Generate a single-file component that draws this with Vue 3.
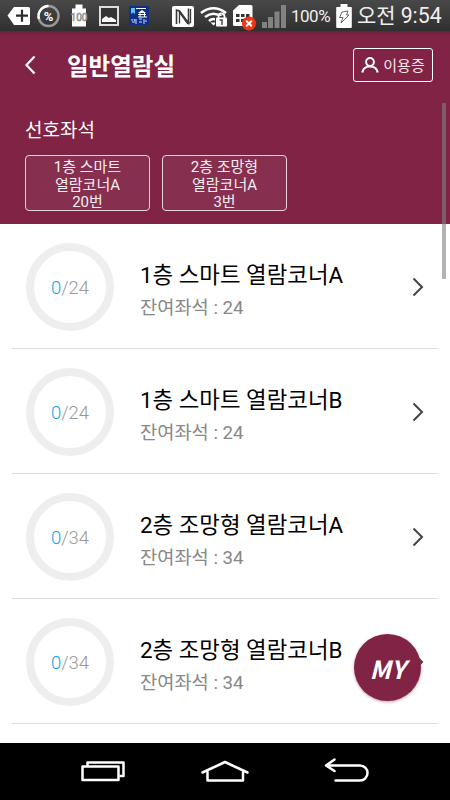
<template>
  <div class="phone">
    <div class="status-bar">
      <svg class="status-icons" width="288" height="32" viewBox="0 0 288 32">
        <path d="M7.5 15.5L14 7h14.5a1.5 1.5 0 0 1 1.5 1.500v15a1.500 1.500 0 0 1-1.500 1.500H14z" fill="#fff" />
        <path d="M16 15.700h12M22 9.700v12" stroke="#2c2c2c" stroke-width="2.200" />
        <circle cx="48.500" cy="16" r="10" fill="none" stroke="#999" stroke-width="2.400" />
        <path d="M48.500 6a10 10 0 0 0-9.500 13" fill="none" stroke="#fff" stroke-width="2.400" />
        <text x="48.500" y="20.500" text-anchor="middle" class="icon-text" font-size="13">%</text>
        <path d="M75.500 4.500h7v4H86v18H72v-18h3.500z" fill="#fff" />
        <text x="79" y="21" text-anchor="middle" class="hundred">100</text>
        <rect x="100" y="7" width="18" height="18" fill="#343434" stroke="#ddd" stroke-width="2" />
        <path d="M102 22v-3l4-3 3 2 2-1 5 3v2z" fill="#fff" />
        <rect x="129" y="6" width="20" height="19" rx="1.500" fill="#0d2f87" />
        <path d="M131 8h4v6l-2-1.500-2 1.500z" fill="#58c3ef" />
        <path d="M138 13l4-3 4 3z" fill="#fff" />
        <path d="M136 8.500h10M138 14.500h8M138 17h9M140 13v4M144.500 13v4" stroke="#fff" stroke-width="1" />
        <path d="M132 19v2M132 22h3M136 19v5M139 19h3M139 22h3M144 19v5M134 19l1 2M146 20v2" stroke="#d6def4" stroke-width="1" />
        <rect x="172" y="6" width="22" height="21" rx="2" fill="#fff" />
        <path d="M176.500 24V10l3 1 9 12V8.500" fill="none" stroke="#383838" stroke-width="1.600" />
        <path d="M179.500 23.500V10.500M190.500 9v13.500l-3 1-8.500-12" fill="none" stroke="#383838" stroke-width="1.300" />
        <g fill="none" stroke="#fff" stroke-width="2.600">
          <path d="M201 13q12.500-9.500 25 0" />
          <path d="M205 17q8.500-6.500 17 0" />
          <path d="M209 21q4.500-4 9 0" />
        </g>
        <path d="M210.500 22.500h6l-3 3z" fill="#fff" />
        <rect x="215" y="16" width="13" height="11" rx="1" fill="#3a3a3a" />
        <path d="M218.500 18v-1.500a3 3 0 0 1 6 0V18" fill="none" stroke="#fff" stroke-width="1.800" />
        <rect x="216" y="17.500" width="11" height="9" rx="1" fill="#fff" />
        <path d="M219.500 20h2.500v5" fill="none" stroke="#444" stroke-width="1.400" />
        <path d="M239 5h12q1.500 0 1.500 1.500V26h-18q-1.500 0-1.500-1.500V10.500z" fill="#fff" />
        <path d="M236 14h3.500v3H236zM241 14h3.500v3H241zM246 14h3.500v3H246zM236 19h3.500v3H236zM241 19h3.500v3H241z" fill="#333" />
        <circle cx="249" cy="23.500" r="7" fill="#ef3517" />
        <path d="M246.200 20.700l5.600 5.600M251.800 20.700l-5.600 5.600" stroke="#fff" stroke-width="2" />
        <path d="M262 22h5v6h-5zM268 17h5v11h-5zM274.500 11.500h5V28h-5zM281 5h5v23h-5z" fill="#828282" />
      </svg>
      <span class="percent">100%</span>
      <svg class="battery" width="16" height="24" viewBox="0 0 16 24">
        <path d="M4.500 0h7v3h3.500q.8 0 .8.8V23q0 1-1 1H1.200q-1 0-1-1V3.800q0-.8.8-.8h3.500z" fill="#fff" />
        <path d="M6 8l6-1-1.500 4H13l-8 8 2-5.500H3.500z" fill="#fff" stroke="#555" stroke-width=".9" />
      </svg>
      <span class="ampm">오전</span>
      <span class="clock">9:54</span>
    </div>

    <header class="header">
      <div class="title-row">
        <svg class="back" width="12" height="20" viewBox="0 0 12 20">
          <path d="M9.500 1.500L1.500 10l8 8.500" fill="none" stroke="#fff" stroke-width="2.200" />
        </svg>
        <h1 class="title">일반열람실</h1>
        <button class="card-btn">
          <svg width="18" height="16" viewBox="0 0 18 16">
            <circle cx="9" cy="5" r="3.900" fill="none" stroke="#fff" stroke-width="2" />
            <path d="M1.300 15.500c.6-3.500 3.500-6 7.700-6s7.100 2.500 7.700 6" fill="none" stroke="#fff" stroke-width="2.200" />
          </svg>
          <span>이용증</span>
        </button>
      </div>
      <h2 class="subtitle">선호좌석</h2>
      <div class="favorites">
        <button v-for="f in favorites" :key="f.seat" class="favorite">
          <span>{{ f.line1 }}</span>
          <span>{{ f.line2 }}</span>
          <span>{{ f.seat }}</span>
        </button>
      </div>
    </header>

    <main class="list">
      <div v-for="room in rooms" :key="room.name" class="room">
        <div class="ring"><span class="used">{{ room.used }}</span>/{{ room.total }}</div>
        <div class="info">
          <div class="name">{{ room.name }}</div>
          <div class="left">잔여좌석 : {{ room.total - room.used }}</div>
        </div>
        <svg class="arrow" width="12" height="20" viewBox="0 0 12 20">
          <path d="M1.500 1.500L10 10l-8.500 8.500" fill="none" stroke="#444" stroke-width="2" />
        </svg>
      </div>
    </main>

    <div class="scrollbar"></div>
    <button class="my-btn">MY</button>

    <nav class="nav-bar">
      <svg width="44" height="23" viewBox="0 0 44 23">
        <g fill="none" stroke="#fff" stroke-width="2.500" stroke-linejoin="round">
          <rect x="1.500" y="6.500" width="36" height="13.500" />
          <path d="M6.500 6V2.500h36v13.500h-4" />
        </g>
      </svg>
      <svg width="48" height="23" viewBox="0 0 48 23">
        <path d="M1.500 12.500L24 2l22.500 10.500M6.500 11v9.500h35.500V11" fill="none" stroke="#fff" stroke-width="2.500" stroke-linecap="round" stroke-linejoin="round" />
      </svg>
      <svg width="44" height="25" viewBox="0 0 44 25">
        <path d="M9.500 -.5L1 5.500l8.500 5.500M1 5.500h34a7.500 7.500 0 0 1 0 15H10.500" fill="none" stroke="#fff" stroke-width="2.500" stroke-linecap="round" stroke-linejoin="round" />
      </svg>
    </nav>
  </div>
</template>

<script setup>
import { ref } from 'vue'

const favorites = ref([
  { line1: '1층 스마트', line2: '열람코너A', seat: '20번' },
  { line1: '2층 조망형', line2: '열람코너A', seat: '3번' }
])

const rooms = ref([
  { name: '1층 스마트 열람코너A', used: 0, total: 24 },
  { name: '1층 스마트 열람코너B', used: 0, total: 24 },
  { name: '2층 조망형 열람코너A', used: 0, total: 34 },
  { name: '2층 조망형 열람코너B', used: 0, total: 34 }
])
</script>

<style>
body {
  margin: 0;
  background: #fff;
}
</style>

<style scoped>
.phone {
  position: relative;
  display: flex;
  flex-direction: column;
  width: 450px;
  height: 800px;
  overflow: hidden;
  background: #fff;
  font-family: Roboto, "Noto Sans CJK KR", sans-serif;
}

.phone * {
  box-sizing: border-box;
}

.phone svg {
  flex: none;
  overflow: visible;
}

button {
  font-family: inherit;
  padding: 0;
  margin: 0;
}

.status-bar {
  display: flex;
  flex: none;
  height: 31px;
  background: linear-gradient(#484848, #303030);
  color: #eee;
  white-space: nowrap;
}

.icon-text {
  fill: #fff;
  font-weight: bold;
}

.hundred {
  font-size: 10px;
  fill: #fff;
  stroke: #777;
  stroke-width: 0.6px;
}

.percent {
  width: 45px;
  padding-left: 3px;
  font-size: 17px;
  line-height: 33px;
  letter-spacing: -0.5px;
}

.battery {
  margin: 4px 0 0 3px;
}

.ampm {
  margin-left: 5px;
  font-size: 21px;
  line-height: 32px;
}

.clock {
  margin-left: 5px;
  font-size: 21.3px;
  line-height: 32px;
}

.header {
  flex: none;
  height: 193px;
  background: linear-gradient(#6d1d3a, #802344 5px);
  color: #fff;
}

.title-row {
  display: flex;
  align-items: center;
  height: 68px;
  padding: 0 17px 0 25px;
}

.title {
  margin: 0 auto 0 30px;
  padding-top: 3px;
  font-size: 23.5px;
  font-weight: 700;
  line-height: 34px;
}

.card-btn {
  display: flex;
  align-items: center;
  justify-content: center;
  gap: 4px;
  width: 80px;
  height: 34px;
  border: 1.5px solid #fff;
  border-radius: 3px;
  background: transparent;
  color: #f4e6eb;
  font-size: 15px;
  line-height: 20px;
}

.card-btn span {
  padding-top: 2px;
}

.subtitle {
  margin: 18px 0 0 25px;
  font-size: 19px;
  font-weight: 400;
  line-height: 28px;
}

.favorites {
  display: flex;
  gap: 12px;
  margin: 10px 0 0 25px;
}

.favorite {
  display: flex;
  flex-direction: column;
  align-items: center;
  width: 125px;
  height: 56px;
  padding-top: 3px;
  border: 1.5px solid #ead4dc;
  border-radius: 4px;
  background: #872f4e;
  color: #f8edf1;
  font-size: 15px;
  line-height: 17.5px;
}

.favorite span {
  flex: none;
  height: 17.5px;
}

.list {
  flex: 1;
  padding: 0 12px;
}

.room {
  display: flex;
  align-items: center;
  height: 125px;
  padding: 2px 14px 0 14px;
  border-bottom: 1px solid #ddd;
}

.ring {
  display: flex;
  align-items: center;
  justify-content: center;
  width: 88px;
  height: 88px;
  padding-top: 2px;
  border: 8px solid #eee;
  border-radius: 50%;
  color: #999;
  font-size: 18.5px;
  font-weight: 300;
}

.used {
  color: #0fa5ea;
}

.info {
  margin: 0 auto 0 26px;
  padding-top: 7px;
  white-space: nowrap;
}

.name {
  font-size: 22.4px;
  line-height: 34px;
  color: #000;
}

.left {
  padding-top: 1px;
  font-size: 18.7px;
  line-height: 30px;
  color: #888;
}

.scrollbar {
  position: absolute;
  top: 103px;
  right: 4px;
  width: 4px;
  height: 176px;
  background: rgba(128, 128, 128, 0.6);
}

.my-btn {
  position: absolute;
  left: 354px;
  top: 634px;
  width: 67px;
  height: 67px;
  padding-top: 1px;
  border: none;
  border-radius: 50%;
  background: #802344;
  box-shadow: 0 1px 3px rgba(128, 35, 68, 0.45);
  color: #fff;
  font-family: "Noto Sans CJK KR", sans-serif;
  font-size: 25px;
  font-style: italic;
  font-weight: 700;
}

.nav-bar {
  display: flex;
  flex: none;
  justify-content: space-between;
  height: 57px;
  padding: 17px 81px 0;
  background: #000;
}
</style>
